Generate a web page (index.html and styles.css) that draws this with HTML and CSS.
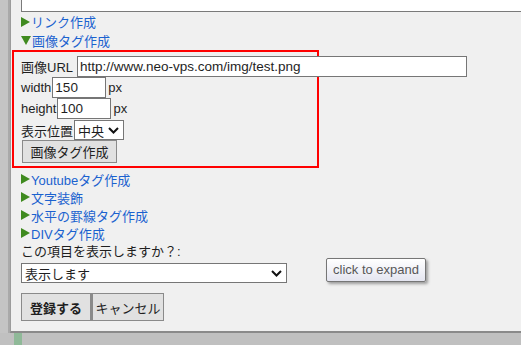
FILE: index.html
```html
<!DOCTYPE html>
<html lang="ja">
  <head>
    <meta charset="UTF-8" />
    <title>画像タグ作成</title>
    <link rel="stylesheet" href="styles.css">
  </head>
  <body>
    <div class="screen">
      <div class="rail"></div>
      <div class="panel">
        <div class="textarea"></div>

        <!-- セクション一覧 -->
        <ul class="sections top">
          <li><svg class="tri" width="9" height="10" viewBox="0 0 9 10"><path d="M0 0L9 5L0 10Z"/></svg><a>リンク作成</a></li>
          <li><svg class="tri" width="10" height="9" viewBox="0 0 10 9"><path d="M0 0L10 0L5 9Z"/></svg><a>画像タグ作成</a></li>
        </ul>

        <div class="editor">
          <div class="row"><label class="wide-label">画像URL</label><input class="field url" type="text" value="http://www.neo-vps.com/img/test.png" /></div>
          <div class="row"><label>width</label><input class="field num" type="text" value="150" /><span class="unit">px</span></div>
          <div class="row"><label>height</label><input class="field num" type="text" value="100" /><span class="unit">px</span></div>
          <div class="row pos">
            <label>表示位置</label>
            <div class="picker small"><span>中央</span><svg width="11" height="7" viewBox="0 0 11 7"><path d="M1 1L5.5 5.5L10 1"/></svg></div>
          </div>
          <button class="btn make">画像タグ作成</button>
        </div>

        <ul class="sections rest">
          <li><svg class="tri" width="9" height="10" viewBox="0 0 9 10"><path d="M0 0L9 5L0 10Z"/></svg><a>Youtubeタグ作成</a></li>
          <li><svg class="tri" width="9" height="10" viewBox="0 0 9 10"><path d="M0 0L9 5L0 10Z"/></svg><a>文字装飾</a></li>
          <li><svg class="tri" width="9" height="10" viewBox="0 0 9 10"><path d="M0 0L9 5L0 10Z"/></svg><a>水平の罫線タグ作成</a></li>
          <li><svg class="tri" width="9" height="10" viewBox="0 0 9 10"><path d="M0 0L9 5L0 10Z"/></svg><a>DIVタグ作成</a></li>
        </ul>

        <p class="question">この項目を表示しますか？:</p>
        <div class="picker wide"><span>表示します</span><svg width="11" height="7" viewBox="0 0 11 7"><path d="M1 1L5.5 5.5L10 1"/></svg></div>

        <div class="actions">
          <button class="btn save">登録する</button>
          <button class="btn">キャンセル</button>
        </div>

        <div class="tooltip">click to expand</div>
      </div>
    </div>
    <div class="floor"><span class="stripe"></span></div>
  </body>
</html>
```

FILE: styles.css
```css
/* Global Styles */
* {
  margin: 0;
  padding: 0;
  box-sizing: border-box;
}

body {
  width: 521px;
  height: 345px;
  overflow: hidden;
  background: #c0c0c0;
  font-family: "Liberation Sans", "Noto Sans CJK JP", sans-serif;
  font-size: 13px;
  color: #1e1e1e;
}

.screen {
  display: flex;
  height: 333px;
}

.rail {
  width: 10px;
  background: #c4c4c4;
  border-right: 2px solid #a9a9a9;
}

.panel {
  position: relative;
  flex: 1;
  background: #f0f0f0;
  border-left: 1px solid #9c9c9c;
  border-bottom: 2px solid #8a8a8a;
  padding-left: 10px;
}

.textarea {
  height: 12px;
  margin-right: -4px;
  background: #fff;
  border-left: 1px solid #7a7a7a;
  border-bottom: 1px solid #7a7a7a;
}

.sections {
  list-style: none;
}

.sections li {
  display: flex;
  align-items: center;
  height: 18px;
}

.sections.top li {
  height: 19px;
}

.sections.rest {
  margin-top: 2px;
}

.tri {
  fill: #3f8a1f;
  margin-right: 1px;
}

.sections a {
  color: #1b62cf;
}

/* 画像タグ作成 */
.editor {
  width: 307px;
  margin-left: -9px;
  border: 2px solid #ff0000;
  padding: 4px 0 3px 7px;
}

.row {
  display: flex;
  align-items: center;
  height: 21px;
}

.row label {
  flex-shrink: 0;
  white-space: nowrap;
  margin-right: 1px;
}

.row .wide-label {
  margin-right: 4px;
}

.field {
  flex-shrink: 0;
  height: 21px;
  border: 1px solid #767676;
  background: #fff;
  font: inherit;
  font-size: 13.5px;
  color: #1e1e1e;
  padding: 0 2px;
  outline: none;
}

.url {
  width: 390px;
}

.num {
  width: 54px;
}

.unit {
  margin-left: 2px;
}

.row.pos {
  height: 20px;
  margin-top: 1px;
}

.picker {
  display: flex;
  align-items: center;
  justify-content: space-between;
  flex-shrink: 0;
  height: 20px;
  background: #fff;
  border: 1px solid #767676;
  padding: 0 4px 0 3px;
}

.picker svg {
  fill: none;
  stroke: #111;
  stroke-width: 2;
}

.picker.small {
  width: 50px;
}

.picker.wide {
  width: 266px;
  margin-top: 2px;
}

.btn {
  display: block;
  font: inherit;
  color: #1e1e1e;
  background: #e1e1e1;
  border: 1px solid #8a8a8a;
  padding: 0;
  white-space: nowrap;
}

.make {
  height: 23px;
  width: 95px;
  margin-left: 1px;
}

.question {
  height: 19px;
  line-height: 19px;
}

.actions {
  display: flex;
  margin-top: 10px;
}

.actions .btn {
  height: 28px;
  width: 72px;
}

.actions .save {
  width: 71px;
  font-weight: bold;
  border-right: 2px solid #8a8a8a;
}

.tooltip {
  position: absolute;
  left: 315px;
  top: 258px;
  height: 24px;
  padding: 0 6px;
  line-height: 22px;
  color: #575757;
  border: 1px solid #767676;
  border-radius: 2px;
  background: linear-gradient(#ffffff, #e4e5f0);
  box-shadow: 2px 2px 3px rgba(0, 0, 0, 0.35);
}

.floor {
  height: 12px;
  padding-left: 14px;
}

.stripe {
  display: block;
  width: 8px;
  height: 12px;
  background: #8fb998;
}
```
